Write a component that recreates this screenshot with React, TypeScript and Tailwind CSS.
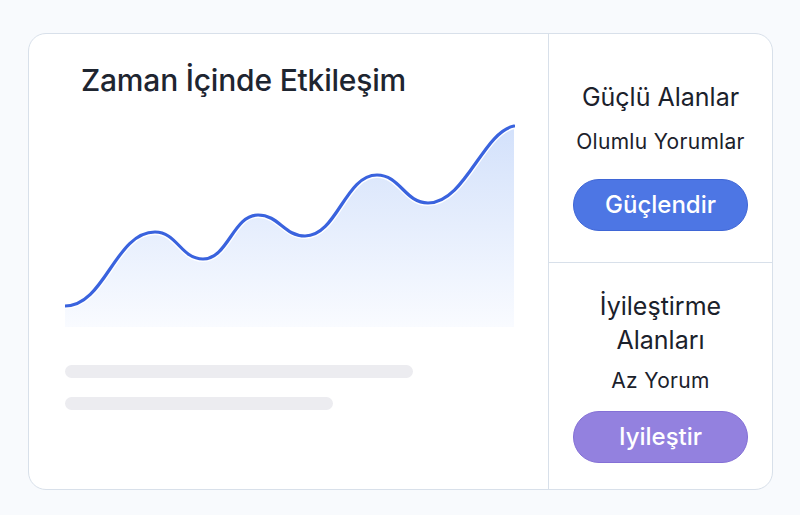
export default function App() {
  const line =
    "M0,186 C40,186 50,112 90,112 C112,112 116,139 138,139 C163,139 168,95 193,95 C214,95 219,116 240,116 C272,116 280,55 312,55 C335,55 340,83 363,83 C400,83 418,12 449,6";

  return (
    <div
      className="w-[800px] h-[515px] bg-[#f8fafd] pt-[33px] pl-[28px]"
      style={{ fontFamily: "Inter, 'Noto Sans', sans-serif" }}
    >
      <div className="w-[745px] h-[457px] rounded-[18px] border border-[#d8e0ea] bg-white flex overflow-hidden">
        {/* left: chart */}
        <div className="w-[520px] border-r border-[#d8e0ea] pl-[36px] pt-[26px]">
          <h1 className="ml-[16px] text-[30px] font-medium text-[#1e2530] leading-[40px] tracking-[-0.2px]">
            Zaman İçinde Etkileşim
          </h1>
          <svg width="450" height="210" viewBox="0 0 450 210" className="mt-[20px] block">
            <defs>
              <linearGradient id="fill" x1="0" y1="0" x2="0" y2="1">
                <stop offset="0%" stopColor="#d3e1fb" />
                <stop offset="100%" stopColor="#f9fbff" />
              </linearGradient>
            </defs>
            <path d={`${line} L449,207 L0,207 Z`} fill="url(#fill)" />
            <path d={line} fill="none" stroke="#ffffff" strokeWidth="6" />
            <path d={line} fill="none" stroke="#3a63de" strokeWidth="3.2" strokeLinecap="round" />
          </svg>
          <div className="mt-[35px] flex flex-col gap-[19px]">
            <div className="w-[348px] h-[13px] rounded-full bg-[#ececf0]" />
            <div className="w-[268px] h-[13px] rounded-full bg-[#ececf0]" />
          </div>
        </div>

        {/* right: summary */}
        <div className="flex-1 flex flex-col">
          <div className="h-[229px] border-b border-[#d8e0ea] flex flex-col items-center pt-[47px]">
            <div className="text-[25px] text-[#1b212b] leading-[32px]">Güçlü Alanlar</div>
            <div className="mt-[15px] text-[21px] tracking-[0.3px] text-[#1b212b] leading-[28px]">Olumlu Yorumlar</div>
            <button className="mt-[23px] w-[175px] h-[52px] rounded-full bg-[#4d76e4] border border-[#3f66d6] text-white text-[24px] font-medium">
              Güçlendir
            </button>
          </div>
          <div className="flex-1 flex flex-col items-center pt-[26px]">
            <div className="text-[25px] text-[#1b212b] leading-[34px] text-center">
              İyileştirme
              <br />
              Alanları
            </div>
            <div className="mt-[9px] text-[21px] tracking-[0.3px] text-[#1b212b] leading-[30px]">Az Yorum</div>
            <button className="mt-[15px] w-[175px] h-[52px] rounded-full bg-[#9381df] border border-[#8470d6] text-white text-[24px] font-medium">
              Iyileştir
            </button>
          </div>
        </div>
      </div>
    </div>
  );
}
